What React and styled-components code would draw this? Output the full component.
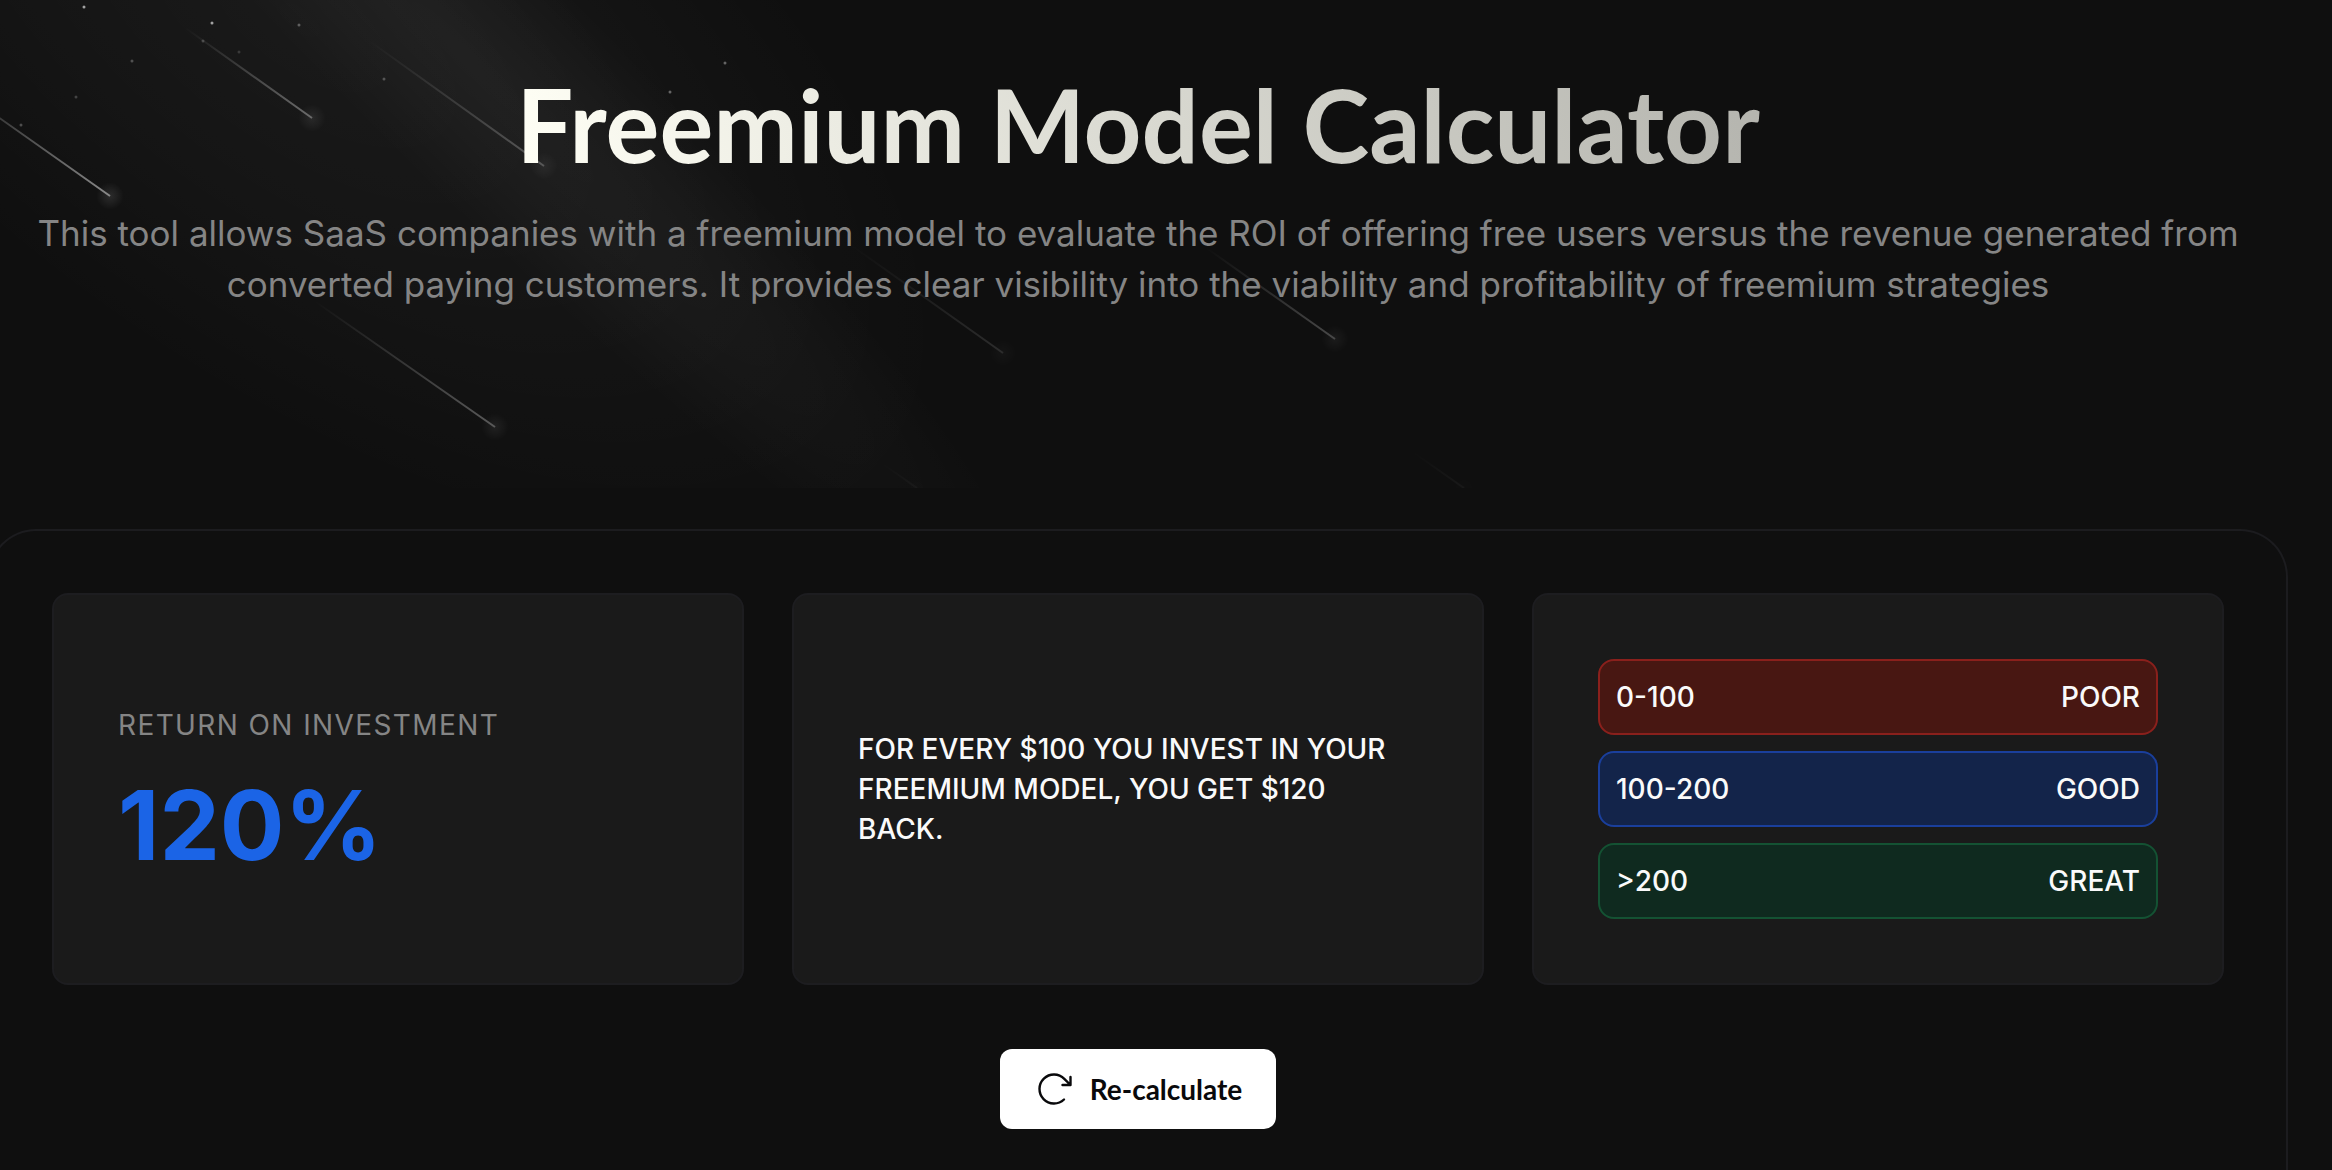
import React from "react"
import styled, { createGlobalStyle } from "styled-components"

const GlobalStyle = createGlobalStyle`
  * {
    box-sizing: border-box;
  }

  body {
    margin: 0;
    background: #0f0f0f;
    color: #fafafa;
    font-family: "Inter", sans-serif;
    font-size: 28px;
    line-height: 40px;
    overflow-x: hidden;
  }

  h1, p {
    margin: 0;
  }
`

const Page = styled.div`
  position: relative;
  overflow: hidden;
`

const Sky = styled.svg`
  position: absolute;
  top: 0;
  left: 0;
`

const Shell = styled.main`
  position: relative;
  margin: 0 44px 0 -12px;
`

const Header = styled.header`
  display: flex;
  flex-direction: column;
  align-items: center;
  gap: 32px;
  padding: 72px 32px 219px;
  text-align: center;
`

const Title = styled.h1`
  font-family: "Lato", sans-serif;
  font-size: 101px;
  font-weight: 700;
  line-height: 104px;
  color: transparent;
  background: linear-gradient(75deg, #fffff5, #b4b4ae);
  background-clip: text;
`

const Lead = styled.p`
  color: #858585;
  font-size: 35px;
  line-height: 51px;
`

const Panel = styled.section`
  display: flex;
  flex-direction: column;
  align-items: center;
  gap: 64px;
  padding: 62px 62px 80px;
  border: 2px solid #1c1c1f;
  border-bottom: 0;
  border-radius: 48px 48px 0 0;
`

const Cards = styled.div`
  display: grid;
  grid-template-columns: repeat(3, 1fr);
  gap: 48px;
  width: 100%;
`

const Card = styled.div`
  display: flex;
  flex-direction: column;
  justify-content: center;
  gap: ${(props) => props.$gap || "0"};
  padding: 64px;
  background: #1a1a1a;
  border: 2px solid #1d1d20;
  border-radius: 16px;
`

const Label = styled.p`
  color: #858585;
  letter-spacing: 0.05em;
  text-transform: uppercase;
`

const Value = styled.p`
  color: #1b64e6;
  font-size: 96px;
  font-weight: 700;
  line-height: 96px;
`

const Summary = styled.p`
  font-weight: 500;
  text-transform: uppercase;
`

const Range = styled.div`
  display: flex;
  justify-content: space-between;
  padding: 16px;
  background: ${(props) => props.$bg};
  border: 2px solid ${(props) => props.$border};
  border-radius: 16px;
  font-weight: 500;
`

const Button = styled.button`
  display: flex;
  align-items: center;
  gap: 16px;
  height: 80px;
  padding: 0 34px;
  background: #fff;
  color: #09090b;
  border: 0;
  border-radius: 12px;
  font-family: "Lato", sans-serif;
  font-size: 28px;
  font-weight: 700;
  cursor: pointer;
`

const ranges = [
  { range: "0-100", grade: "POOR", bg: "#481712", border: "#8a201c" },
  { range: "100-200", grade: "GOOD", bg: "#13244a", border: "#1a3f9c" },
  { range: ">200", grade: "GREAT", bg: "#0f2a1f", border: "#145233" },
]

// x1, y1, x2, y2, opacity
const meteors = [
  [-60, 76, 110, 196, 0.5],
  [184, 27, 312, 118, 0.36],
  [368, 40, 544, 166, 0.26],
  [313, 300, 495, 427, 0.3],
  [848, 243, 1003, 353, 0.12],
  [1205, 247, 1335, 339, 0.24],
  [880, 462, 917, 488, 0.03],
  [1410, 450, 1464, 488, 0.04],
]

// x, y, opacity
const stars = [
  [84, 7, 0.6],
  [212, 23, 0.6],
  [299, 25, 0.3],
  [203, 41, 0.2],
  [239, 52, 0.15],
  [132, 61, 0.25],
  [384, 79, 0.25],
  [76, 97, 0.2],
  [21, 125, 0.25],
  [725, 63, 0.35],
  [670, 92, 0.35],
]

const MeteorShower = () => (
  <Sky width="1600" height="488" viewBox="0 0 1600 488" aria-hidden="true">
    <defs>
      <radialGradient id="beam">
        <stop offset="0" stopColor="#fff" stopOpacity="0.045" />
        <stop offset="0.5" stopColor="#fff" stopOpacity="0.025" />
        <stop offset="1" stopColor="#fff" stopOpacity="0" />
      </radialGradient>
      <radialGradient id="glow">
        <stop offset="0" stopColor="#fff" stopOpacity="0.22" />
        <stop offset="1" stopColor="#fff" stopOpacity="0" />
      </radialGradient>
      {meteors.map(([x1, y1, x2, y2], i) => (
        <linearGradient
          key={i}
          id={`tail${i}`}
          gradientUnits="userSpaceOnUse"
          x1={x1}
          y1={y1}
          x2={x2}
          y2={y2}
        >
          <stop offset="0" stopColor="#fff" stopOpacity="0" />
          <stop offset="1" stopColor="#fff" />
        </linearGradient>
      ))}
    </defs>
    <ellipse cx="300" cy="20" rx="760" ry="360" fill="url(#beam)" transform="rotate(36 300 20)" />
    <ellipse cx="470" cy="60" rx="800" ry="120" fill="url(#beam)" transform="rotate(45 470 60)" />
    {meteors.map(([x1, y1, x2, y2, opacity], i) => (
      <g key={i} opacity={opacity}>
        <line x1={x1} y1={y1} x2={x2} y2={y2} stroke={`url(#tail${i})`} strokeWidth="2" />
        <circle cx={x2} cy={y2} r="14" fill="url(#glow)" />
      </g>
    ))}
    {stars.map(([x, y, opacity]) => (
      <circle key={x} cx={x} cy={y} r="1.5" fill="#fff" opacity={opacity} />
    ))}
  </Sky>
)

const RefreshIcon = () => (
  <svg width="40" height="40" viewBox="0 0 40 40" fill="none" stroke="currentColor" strokeWidth="2.4" strokeLinecap="round" strokeLinejoin="round">
    <path d="M30 30.5A14.5 14.5 0 1 1 30.3 9.8L36.5 16M36.5 8V16H28.5" />
  </svg>
)

const App = () => {
  return (
    <Page>
      <GlobalStyle />
      <MeteorShower />
      <Shell>
        <Header>
          <Title>Freemium Model Calculator</Title>
          <Lead>
            This tool allows SaaS companies with a freemium model to evaluate the ROI of offering
            free users versus the revenue generated from converted paying customers. It provides
            clear visibility into the viability and profitability of freemium strategies
          </Lead>
        </Header>

        <Panel>
          <Cards>
            <Card $gap="32px">
              <Label>Return on investment</Label>
              <Value>120%</Value>
            </Card>
            <Card>
              <Summary>For every $100 you invest in your freemium model, you get $120 back.</Summary>
            </Card>
            <Card $gap="16px">
              {ranges.map(({ range, grade, bg, border }) => (
                <Range key={grade} $bg={bg} $border={border}>
                  <span>{range}</span>
                  <span>{grade}</span>
                </Range>
              ))}
            </Card>
          </Cards>
          <Button type="button">
            <RefreshIcon />
            Re-calculate
          </Button>
        </Panel>
      </Shell>
    </Page>
  )
}

export default App
